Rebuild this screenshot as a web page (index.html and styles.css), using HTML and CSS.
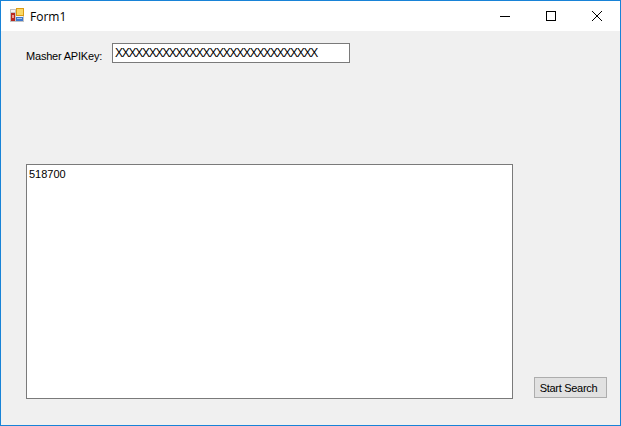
FILE: index.html
```html
<!DOCTYPE html>
<html lang="en">
<head>
<meta charset="utf-8">
<title>Form1</title>
<link rel="stylesheet" href="styles.css">
</head>
<body>
<div class="window">
  <header class="titlebar">
    <svg class="app-icon" width="16" height="16" viewBox="0 0 16 16">
      <rect x="0.5" y="1.5" width="13" height="12" fill="#f4f4f4" stroke="#c4c4c4"/>
      <rect x="0" y="4" width="6" height="1" fill="#c4c4c4"/>
      <rect x="5" y="1" width="1" height="13" fill="#c4c4c4"/>
      <rect x="1" y="5" width="4" height="8" fill="#b8281f"/>
      <rect x="2" y="7" width="2" height="3" fill="#ee9a90"/>
      <rect x="6" y="0" width="8" height="8" fill="#dc9c14"/>
      <rect x="7" y="1" width="6" height="6" fill="#f9d766"/>
      <rect x="6" y="9" width="7" height="4" fill="#3f78cc"/>
      <rect x="7" y="10" width="5" height="1" fill="#a8c8f0"/>
    </svg>
    <span class="title">Form1</span>
    <div class="caption-buttons">
      <div class="caption-button">
        <svg width="10" height="10" viewBox="0 0 10 10"><rect x="0" y="5" width="10" height="1" fill="#000"/></svg>
      </div>
      <div class="caption-button">
        <svg width="10" height="10" viewBox="0 0 10 10"><rect x="0.5" y="0.5" width="9" height="9" fill="none" stroke="#000"/></svg>
      </div>
      <div class="caption-button">
        <svg width="10" height="10" viewBox="0 0 10 10"><path d="M0 0L10 10M10 0L0 10" stroke="#000" fill="none" stroke-width="1"/></svg>
      </div>
    </div>
  </header>
  <main class="client">
    <div class="key-row">
      <label class="key-label">Masher APIKey:</label>
      <div class="key-input">XXXXXXXXXXXXXXXXXXXXXXXXXXXXXX</div>
    </div>
    <div class="lower-row">
      <div class="results">518700</div>
      <button class="search-button">Start Search</button>
    </div>
  </main>
</div>
</body>
</html>
```
FILE: styles.css
```css
* { box-sizing: border-box; }
html, body { margin: 0; padding: 0; }
body {
  width: 621px;
  height: 426px;
  overflow: hidden;
  font-family: "Liberation Sans", Arial, sans-serif;
  font-size: 11px;
  color: #000;
}
.window {
  width: 621px;
  height: 426px;
  border: 1px solid #1883d7;
  display: flex;
  flex-direction: column;
  background: #f0f0f0;
}
.titlebar {
  height: 30px;
  background: #fff;
  display: flex;
  align-items: center;
  padding-left: 9px;
}
.app-icon { flex: none; }
.title {
  margin-left: 4px;
  font-family: "Open Sans", sans-serif;
  font-size: 12px;
}
.caption-buttons { margin-left: auto; display: flex; }
.caption-button {
  width: 46px;
  height: 30px;
  display: flex;
  align-items: center;
  justify-content: center;
}
.client {
  flex: 1;
  display: flex;
  flex-direction: column;
  padding: 12px 13px 26px 25px;
}
.key-row { display: flex; align-items: center; height: 20px; }
.key-label {
  width: 86px;
  flex: none;
  white-space: nowrap;
  padding-top: 6px;
  letter-spacing: -0.2px;
}
.key-input {
  width: 238px;
  height: 20px;
  background: #fff;
  border: 1px solid #7a7a7a;
  padding-left: 2px;
  font-size: 12px;
  line-height: 18px;
  white-space: nowrap;
  overflow: hidden;
  letter-spacing: -1.27px;
}
.lower-row {
  margin-top: 101px;
  display: flex;
  align-items: flex-end;
  justify-content: space-between;
}
.results {
  width: 487px;
  height: 235px;
  background: #fff;
  border: 1px solid #7a7a7a;
  padding: 2px;
  line-height: 14px;
}
.search-button {
  width: 73px;
  height: 21px;
  margin-bottom: 1px;
  padding: 0 4px 0 0;
  background: #e1e1e1;
  border: 1px solid #adadad;
  font: inherit;
  letter-spacing: -0.3px;
  color: #000;
}
```
